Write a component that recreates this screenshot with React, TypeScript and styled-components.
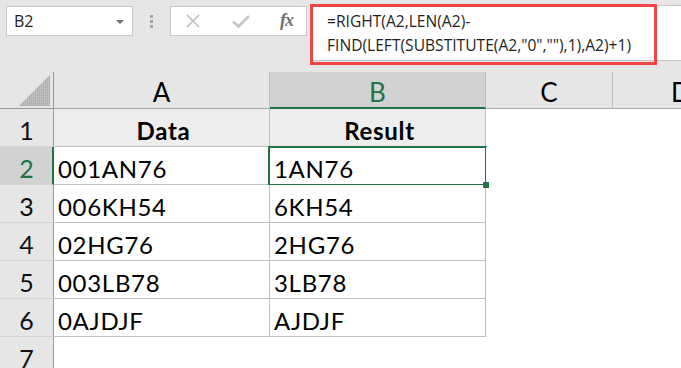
import React, { FC } from "react";
import styled, { createGlobalStyle, css } from "styled-components";

const GREEN = "#217346";

const GlobalStyle = createGlobalStyle`
  html, body {
    margin: 0;
    padding: 0;
    background: #ffffff;
    overflow: hidden;
  }
`;

const rows = [
  ["001AN76", "1AN76"],
  ["006KH54", "6KH54"],
  ["02HG76", "2HG76"],
  ["003LB78", "3LB78"],
  ["0AJDJF", "AJDJF"],
];

const App: FC = () => {
  return (
    <Page>
      <GlobalStyle />
      <Toolbar>
        <NameBox>
          <span>B2</span>
          <Caret />
        </NameBox>
        <Grip>
          <Dot />
          <Dot />
          <Dot />
        </Grip>
        <FuncBox>
          <svg width="16" height="16" viewBox="0 0 16 16">
            <path d="M2 2 L14 14 M14 2 L2 14" stroke="#bdbdbd" strokeWidth="1.6" fill="none" />
          </svg>
          <svg width="20" height="16" viewBox="0 0 20 16">
            <path d="M2 8.5 L7.5 13.5 L18 3" stroke="#c3c3c3" strokeWidth="2.6" fill="none" />
          </svg>
          <Fx>fx</Fx>
        </FuncBox>
        <FormulaBar>
          <FormulaLine>=RIGHT(A2,LEN(A2)-</FormulaLine>
          <FormulaLine>FIND(LEFT(SUBSTITUTE(A2,"0",""),1),A2)+1)</FormulaLine>
          <Highlight />
        </FormulaBar>
      </Toolbar>
      <Sheet>
        <Corner>
          <svg width="31" height="31" viewBox="0 0 31 31">
            <defs>
              <pattern id="hatch" width="2" height="2" patternUnits="userSpaceOnUse">
                <rect width="2" height="2" fill="#bcbcbc" />
                <rect width="1" height="1" fill="#a9a9a9" />
              </pattern>
            </defs>
            <polygon points="31,0 31,31 0,31" fill="url(#hatch)" />
          </svg>
        </Corner>
        <ColHead>A</ColHead>
        <ColHead $active>B</ColHead>
        <ColHead>C</ColHead>
        <ColHead $last>D</ColHead>

        <RowHead>1</RowHead>
        <Cell $boxed $head $center>Data</Cell>
        <Cell $boxed $head $center>Result</Cell>
        <Cell />
        <Cell />

        {rows.map(([data, result], i) => (
          <React.Fragment key={data}>
            <RowHead $active={i === 0}>{i + 2}</RowHead>
            <Cell $boxed>{data}</Cell>
            <Cell $boxed $selected={i === 0}>{result}</Cell>
            <Cell />
            <Cell />
          </React.Fragment>
        ))}

        <RowHead>7</RowHead>
        <Cell />
        <Cell />
        <Cell />
        <Cell />
      </Sheet>
    </Page>
  );
};

export default App;

const Page = styled.div`
  width: 681px;
  height: 368px;
  overflow: hidden;
  background: #ffffff;
`;

const Toolbar = styled.div`
  height: 72px;
  box-sizing: border-box;
  background: #e6e6e6;
  display: flex;
  align-items: flex-start;
  padding: 6px 0 0 6px;
`;

const boxBase = css`
  box-sizing: border-box;
  height: 30px;
  background: #ffffff;
  border: 1px solid #c6c6c6;
  display: flex;
  align-items: center;
`;

const NameBox = styled.div`
  ${boxBase};
  width: 127px;
  padding: 0 8px 0 7px;
  justify-content: space-between;
  font-family: "Open Sans", sans-serif;
  font-size: 16px;
  color: #222222;
`;

const Caret = styled.div`
  width: 0;
  height: 0;
  border-left: 4px solid transparent;
  border-right: 4px solid transparent;
  border-top: 4px solid #707070;
  margin-top: 1px;
`;

const Grip = styled.div`
  width: 37px;
  height: 30px;
  display: flex;
  flex-direction: column;
  align-items: center;
  justify-content: center;
  gap: 2px;
`;

const Dot = styled.div`
  width: 3px;
  height: 3px;
  background: #a3a3a3;
`;

const FuncBox = styled.div`
  ${boxBase};
  width: 137px;
  padding: 0 13px 0 14px;
  justify-content: space-between;
`;

const Fx = styled.span`
  font-family: "Liberation Serif", serif;
  font-style: italic;
  font-weight: bold;
  font-size: 18px;
  color: #6f6f6f;
  letter-spacing: -1px;
  margin-top: -2px;
`;

const FormulaBar = styled.div`
  position: relative;
  flex: 1;
  margin: -1px 0 0 4px;
  height: 56px;
  box-sizing: border-box;
  background: #ffffff;
  border: 1px solid #c6c6c6;
  border-right: none;
  padding: 4px 0 0 15px;
`;

const FormulaLine = styled.div`
  font-family: "Open Sans", sans-serif;
  font-size: 15.6px;
  line-height: 23.5px;
  color: #1f1f1f;
  white-space: nowrap;
`;

const Highlight = styled.div`
  position: absolute;
  left: -2px;
  top: -2px;
  width: 347px;
  height: 61px;
  box-sizing: border-box;
  border: 3.5px solid #f24545;
  pointer-events: none;
`;

const Sheet = styled.div`
  display: grid;
  grid-template-columns: 54px 216px 216px 127px 1fr;
  grid-template-rows: 37px repeat(7, 38px);
`;

const Corner = styled.div`
  box-sizing: border-box;
  background: #e6e6e6;
  border-right: 1px solid #9b9b9b;
  border-bottom: 1px solid #9b9b9b;
  display: flex;
  align-items: flex-end;
  justify-content: flex-end;
  padding: 0 3px 2px 0;
`;

const ColHead = styled.div<{ $active?: boolean; $last?: boolean }>`
  box-sizing: border-box;
  background: ${(p) => (p.$active ? "#d2d2d2" : "#e6e6e6")};
  border-right: 1px solid ${(p) => (p.$last ? "transparent" : "#bdbdbd")};
  border-bottom: ${(p) => (p.$active ? `2px solid ${GREEN}` : "1px solid #a6a6a6")};
  display: flex;
  align-items: center;
  justify-content: center;
  padding-top: 4px;
  font-family: Lato, sans-serif;
  font-size: 26px;
  color: ${(p) => (p.$active ? GREEN : "#000000")};
  ${(p) => p.$last && "justify-content: flex-start; padding-left: 58px;"}
`;

const RowHead = styled.div<{ $active?: boolean }>`
  box-sizing: border-box;
  background: ${(p) => (p.$active ? "#d2d2d2" : "#e6e6e6")};
  border-right: ${(p) => (p.$active ? `2px solid ${GREEN}` : "1px solid #9b9b9b")};
  border-bottom: 1px solid #d4d4d4;
  display: flex;
  align-items: center;
  justify-content: center;
  padding-top: 4px;
  padding-left: ${(p) => (p.$active ? "1px" : "0")};
  font-family: Lato, sans-serif;
  font-size: 25px;
  color: ${(p) => (p.$active ? GREEN : "#111111")};
`;

const Cell = styled.div<{
  $boxed?: boolean;
  $head?: boolean;
  $center?: boolean;
  $selected?: boolean;
}>`
  position: relative;
  box-sizing: border-box;
  background: ${(p) => (p.$head ? "#ededed" : "#ffffff")};
  border-right: 1px solid ${(p) => (p.$boxed ? "#bfbfbf" : "transparent")};
  border-bottom: 1px solid ${(p) => (p.$boxed ? "#bfbfbf" : "transparent")};
  display: flex;
  align-items: center;
  justify-content: ${(p) => (p.$center ? "center" : "flex-start")};
  padding: 5px 0 0 4px;
  font-family: Lato, sans-serif;
  font-size: 24px;
  font-weight: ${(p) => (p.$head ? 700 : 400)};
  letter-spacing: 0.7px;
  color: #000000;
  white-space: nowrap;

  ${(p) =>
    p.$selected &&
    css`
      &::after {
        content: "";
        position: absolute;
        left: -2px;
        top: -1px;
        right: -2px;
        bottom: -2px;
        border: 2px solid ${GREEN};
      }
      &::before {
        content: "";
        position: absolute;
        right: -4px;
        bottom: -4px;
        width: 6px;
        height: 6px;
        background: ${GREEN};
        z-index: 1;
      }
    `}
`;
